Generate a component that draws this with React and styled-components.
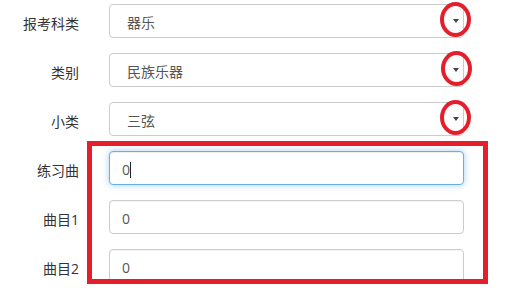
import React from 'react';
import styled, { createGlobalStyle } from 'styled-components';

const GlobalStyle = createGlobalStyle`
  html, body {
    margin: 0;
    padding: 0;
    background: #fff;
  }
  body {
    font-family: "Open Sans", "Noto Sans CJK SC", sans-serif;
    overflow: hidden;
  }
`;

const Form = styled.div`
  width: 523px;
  height: 288px;
  padding-top: 4px;
  box-sizing: border-box;
  overflow: hidden;
`;

const Row = styled.div`
  display: flex;
  align-items: center;
  height: 34px;
  margin-bottom: 15px;
`;

const Label = styled.label`
  width: 79px;
  text-align: right;
  font-size: 14px;
  color: #333;
  padding-top: 3px;
`;

const Control = styled.div`
  position: relative;
  width: 355px;
  height: 34px;
  margin-left: 30px;
`;

const Select = styled.select`
  appearance: none;
  -webkit-appearance: none;
  width: 100%;
  height: 34px;
  box-sizing: border-box;
  border: 1px solid #ccc;
  border-radius: 4px;
  background: #fff;
  padding: 3px 0 0 17px;
  font-family: "Open Sans", "Noto Sans CJK SC", sans-serif;
  font-size: 14px;
  color: #555;
  outline: none;
`;

const Arrow = styled.span`
  position: absolute;
  left: 344px;
  top: 15px;
  width: 0;
  height: 0;
  border-left: 3px solid transparent;
  border-right: 3px solid transparent;
  border-top: 4px solid #444;
  pointer-events: none;
`;

const Ring = styled.span`
  position: absolute;
  left: ${(p) => p.$dx}px;
  top: -2px;
  width: 31px;
  height: 35px;
  box-sizing: border-box;
  border: 4px solid #e41e2b;
  border-radius: 50%;
  pointer-events: none;
`;

const Input = styled.input`
  width: 100%;
  height: 34px;
  box-sizing: border-box;
  border: 1px solid ${(p) => (p.$focused ? '#66afe9' : '#ccc')};
  border-radius: 4px;
  padding: 3px 0 0 12px;
  font-family: "Open Sans", "Noto Sans CJK SC", sans-serif;
  font-size: 14px;
  color: #555;
  outline: none;
  box-shadow: ${(p) =>
    p.$focused
      ? 'inset 0 1px 1px rgba(0,0,0,.075), 0 0 7px rgba(102,175,233,.6)'
      : 'inset 0 1px 1px rgba(0,0,0,.05)'};
`;

const Caret = styled.span`
  position: absolute;
  left: 21px;
  top: 11px;
  width: 1px;
  height: 16px;
  background: #222;
`;

const Highlight = styled.div`
  position: relative;

  &::after {
    content: '';
    position: absolute;
    top: -10px;
    left: 87px;
    width: 401px;
    height: 143px;
    box-sizing: border-box;
    border: 5px solid #e41e2b;
    pointer-events: none;
  }
`;

const selects = [
  { label: '报考科类', value: '器乐', dx: 331 },
  { label: '类别', value: '民族乐器', dx: 332 },
  { label: '小类', value: '三弦', dx: 331 },
];

const inputs = [
  { label: '练习曲', value: '0', focused: true },
  { label: '曲目1', value: '0' },
  { label: '曲目2', value: '0' },
];

const App = () => (
  <>
    <GlobalStyle />
    <Form>
      {selects.map((s) => (
        <Row key={s.label}>
          <Label>{s.label}</Label>
          <Control>
            <Select defaultValue={s.value}>
              <option>{s.value}</option>
            </Select>
            <Arrow />
            <Ring $dx={s.dx} />
          </Control>
        </Row>
      ))}
      <Highlight>
        {inputs.map((f) => (
          <Row key={f.label}>
            <Label>{f.label}</Label>
            <Control>
              <Input $focused={f.focused} defaultValue={f.value} readOnly />
              {f.focused && <Caret />}
            </Control>
          </Row>
        ))}
      </Highlight>
    </Form>
  </>
);

export default App;
